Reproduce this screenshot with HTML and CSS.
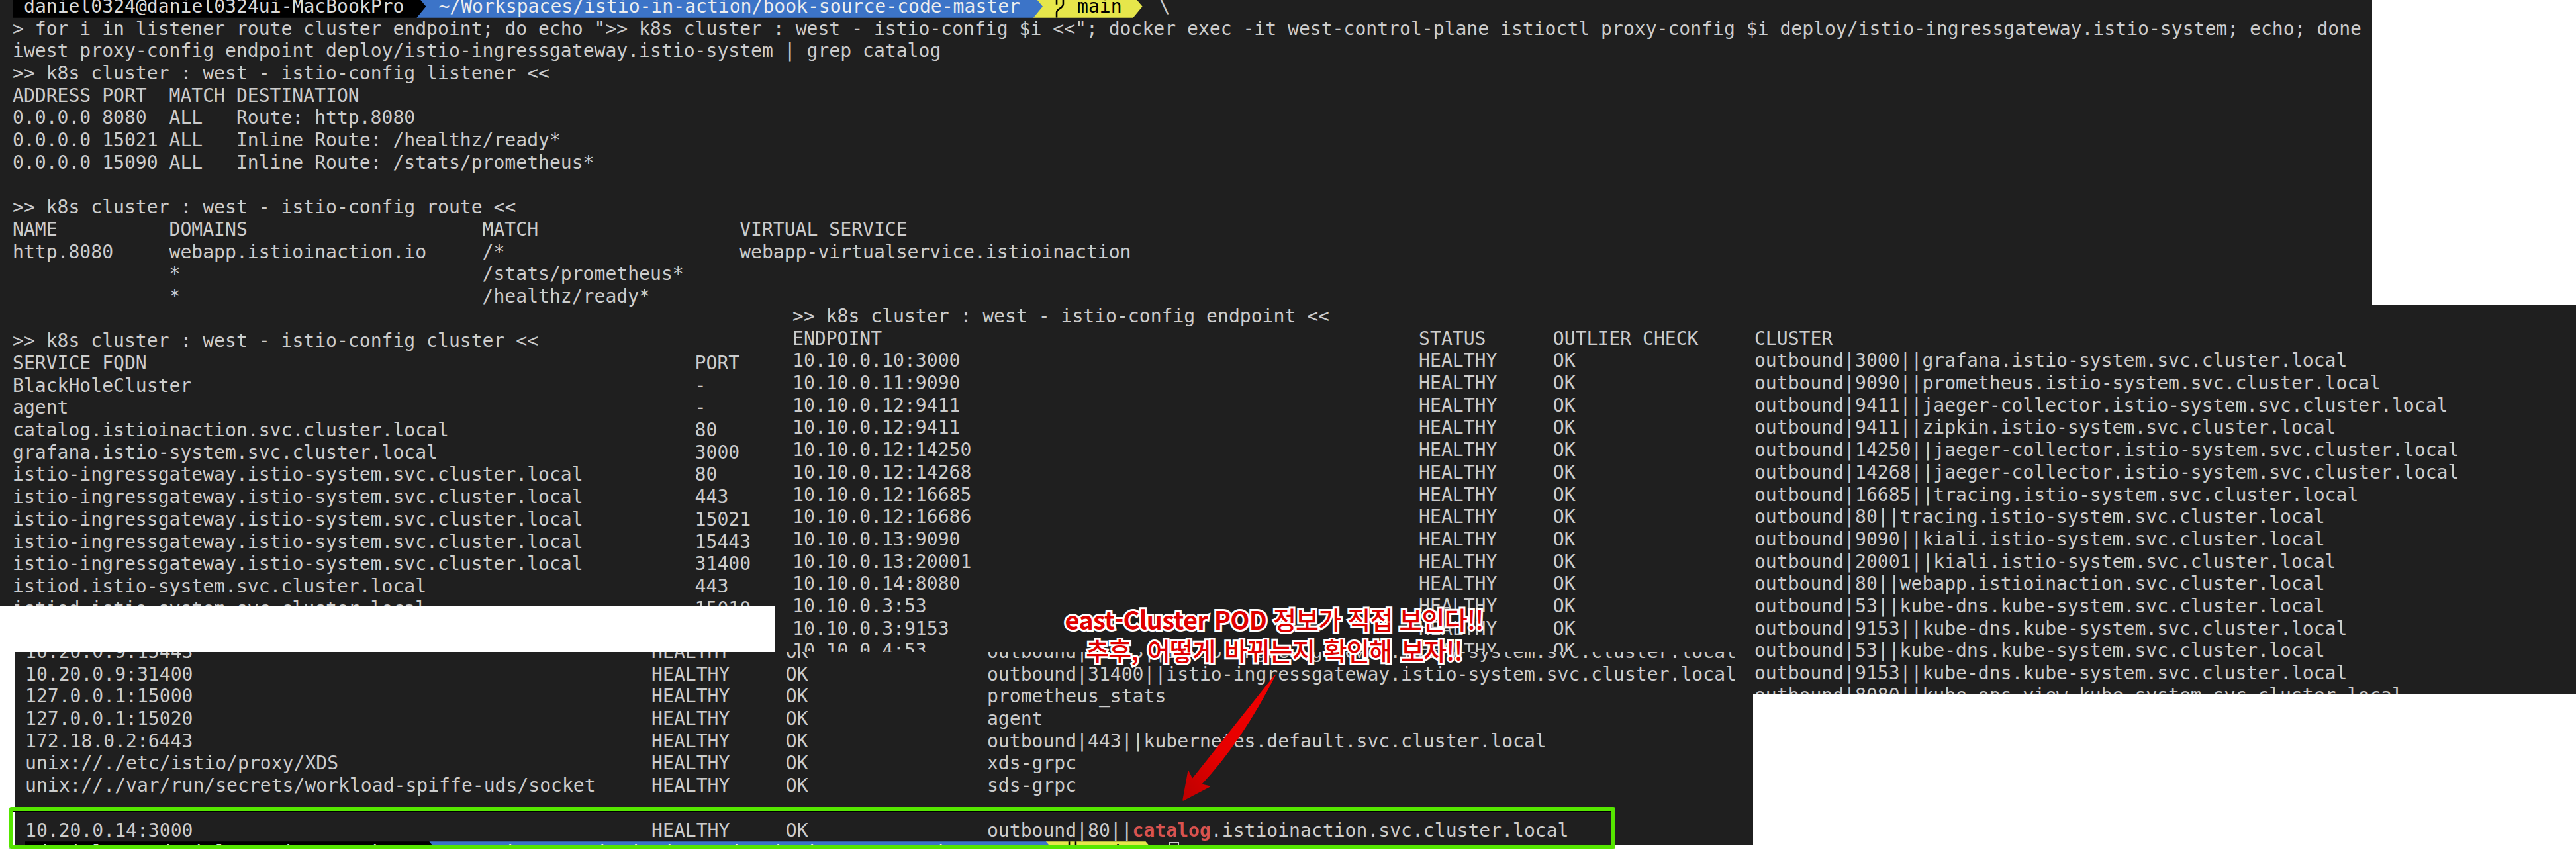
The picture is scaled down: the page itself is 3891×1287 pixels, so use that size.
FILE: index.html
```html
<!DOCTYPE html>
<html lang="en">
<head>
<meta charset="utf-8">
<title>istio proxy-config</title>
<link rel="stylesheet" href="styles.css">
</head>
<body>
<main class="canvas">

  <section class="panel panel-top">
    <div class="prompt">
      <span class="seg seg-user">daniel0324@daniel0324ui-MacBookPro</span>
      <span class="seg seg-path">~/Workspaces/istio-in-action/book-source-code-master</span>
      <span class="seg seg-git"><svg class="branch" viewBox="0 0 18 34"><path d="M4 34V26C4 20 14 20 14 13V0M4 0V14"/></svg>main</span>
      <span class="slash">\</span>
    </div>
    <div class="line">&gt; for i in listener route cluster endpoint; do echo "&gt;&gt; k8s cluster : west - istio-config $i &lt;&lt;"; docker exec -it west-control-plane istioctl proxy-config $i deploy/istio-ingressgateway.istio-system; echo; done</div>
    <div class="line">iwest proxy-config endpoint deploy/istio-ingressgateway.istio-system | grep catalog</div>
    <div class="line">&gt;&gt; k8s cluster : west - istio-config listener &lt;&lt;</div>
    <div class="grid listener">
      <span>ADDRESS</span><span>PORT</span><span>MATCH</span><span>DESTINATION</span>
      <span>0.0.0.0</span><span>8080</span><span>ALL</span><span>Route: http.8080</span>
      <span>0.0.0.0</span><span>15021</span><span>ALL</span><span>Inline Route: /healthz/ready*</span>
      <span>0.0.0.0</span><span>15090</span><span>ALL</span><span>Inline Route: /stats/prometheus*</span>
    </div>
    <div class="line blank"></div>
    <div class="line">&gt;&gt; k8s cluster : west - istio-config route &lt;&lt;</div>
    <div class="grid route">
      <span>NAME</span><span>DOMAINS</span><span>MATCH</span><span>VIRTUAL SERVICE</span>
      <span>http.8080</span><span>webapp.istioinaction.io</span><span>/*</span><span>webapp-virtualservice.istioinaction</span>
      <span></span><span>*</span><span>/stats/prometheus*</span><span></span>
      <span></span><span>*</span><span>/healthz/ready*</span><span></span>
    </div>
    <div class="line blank"></div>
    <div class="line">&gt;&gt; k8s cluster : west - istio-config cluster &lt;&lt;</div>
    <div class="grid cluster">
      <span>SERVICE FQDN</span><span>PORT</span>
      <span>BlackHoleCluster</span><span>-</span>
      <span>agent</span><span>-</span>
      <span>catalog.istioinaction.svc.cluster.local</span><span>80</span>
      <span>grafana.istio-system.svc.cluster.local</span><span>3000</span>
      <span>istio-ingressgateway.istio-system.svc.cluster.local</span><span>80</span>
      <span>istio-ingressgateway.istio-system.svc.cluster.local</span><span>443</span>
      <span>istio-ingressgateway.istio-system.svc.cluster.local</span><span>15021</span>
      <span>istio-ingressgateway.istio-system.svc.cluster.local</span><span>15443</span>
      <span>istio-ingressgateway.istio-system.svc.cluster.local</span><span>31400</span>
      <span>istiod.istio-system.svc.cluster.local</span><span>443</span>
      <span>istiod.istio-system.svc.cluster.local</span><span>15010</span>
    </div>
  </section>

  <section class="panel panel-endpoint">
    <div class="line">&gt;&gt; k8s cluster : west - istio-config endpoint &lt;&lt;</div>
    <div class="grid endpoint">
      <span>ENDPOINT</span><span>STATUS</span><span>OUTLIER CHECK</span><span>CLUSTER</span>
      <span>10.10.0.10:3000</span><span>HEALTHY</span><span>OK</span><span>outbound|3000||grafana.istio-system.svc.cluster.local</span>
      <span>10.10.0.11:9090</span><span>HEALTHY</span><span>OK</span><span>outbound|9090||prometheus.istio-system.svc.cluster.local</span>
      <span>10.10.0.12:9411</span><span>HEALTHY</span><span>OK</span><span>outbound|9411||jaeger-collector.istio-system.svc.cluster.local</span>
      <span>10.10.0.12:9411</span><span>HEALTHY</span><span>OK</span><span>outbound|9411||zipkin.istio-system.svc.cluster.local</span>
      <span>10.10.0.12:14250</span><span>HEALTHY</span><span>OK</span><span>outbound|14250||jaeger-collector.istio-system.svc.cluster.local</span>
      <span>10.10.0.12:14268</span><span>HEALTHY</span><span>OK</span><span>outbound|14268||jaeger-collector.istio-system.svc.cluster.local</span>
      <span>10.10.0.12:16685</span><span>HEALTHY</span><span>OK</span><span>outbound|16685||tracing.istio-system.svc.cluster.local</span>
      <span>10.10.0.12:16686</span><span>HEALTHY</span><span>OK</span><span>outbound|80||tracing.istio-system.svc.cluster.local</span>
      <span>10.10.0.13:9090</span><span>HEALTHY</span><span>OK</span><span>outbound|9090||kiali.istio-system.svc.cluster.local</span>
      <span>10.10.0.13:20001</span><span>HEALTHY</span><span>OK</span><span>outbound|20001||kiali.istio-system.svc.cluster.local</span>
      <span>10.10.0.14:8080</span><span>HEALTHY</span><span>OK</span><span>outbound|80||webapp.istioinaction.svc.cluster.local</span>
      <span>10.10.0.3:53</span><span>HEALTHY</span><span>OK</span><span>outbound|53||kube-dns.kube-system.svc.cluster.local</span>
      <span>10.10.0.3:9153</span><span>HEALTHY</span><span>OK</span><span>outbound|9153||kube-dns.kube-system.svc.cluster.local</span>
      <span>10.10.0.4:53</span><span>HEALTHY</span><span>OK</span><span>outbound|53||kube-dns.kube-system.svc.cluster.local</span>
      <span>10.10.0.4:9153</span><span>HEALTHY</span><span>OK</span><span>outbound|9153||kube-dns.kube-system.svc.cluster.local</span>
      <span>10.10.0.5:8080</span><span>HEALTHY</span><span>OK</span><span>outbound|8080||kube-ops-view.kube-system.svc.cluster.local</span>
    </div>
  </section>

  <section class="panel panel-east">
    <div class="grid endpoint">
      <span>10.20.0.9:15443</span><span>HEALTHY</span><span>OK</span><span>outbound|15443||istio-ingressgateway.istio-system.svc.cluster.local</span>
      <span>10.20.0.9:31400</span><span>HEALTHY</span><span>OK</span><span>outbound|31400||istio-ingressgateway.istio-system.svc.cluster.local</span>
      <span>127.0.0.1:15000</span><span>HEALTHY</span><span>OK</span><span>prometheus_stats</span>
      <span>127.0.0.1:15020</span><span>HEALTHY</span><span>OK</span><span>agent</span>
      <span>172.18.0.2:6443</span><span>HEALTHY</span><span>OK</span><span>outbound|443||kubernetes.default.svc.cluster.local</span>
      <span>unix://./etc/istio/proxy/XDS</span><span>HEALTHY</span><span>OK</span><span>xds-grpc</span>
      <span>unix://./var/run/secrets/workload-spiffe-uds/socket</span><span>HEALTHY</span><span>OK</span><span>sds-grpc</span>
    </div>
    <div class="line blank"></div>
    <div class="grid endpoint">
      <span>10.20.0.14:3000</span><span>HEALTHY</span><span>OK</span><span>outbound|80||<b class="match">catalog</b>.istioinaction.svc.cluster.local</span>
    </div>
    <div class="prompt">
      <span class="seg seg-user">daniel0324@daniel0324ui-MacBookPro</span>
      <span class="seg seg-path">~/Workspaces/istio-in-action/book-source-code-master</span>
      <span class="seg seg-git"><svg class="branch" viewBox="0 0 18 34"><path d="M4 34V26C4 20 14 20 14 13V0M4 0V14"/></svg>main</span>
      <span class="cursor"></span>
    </div>
  </section>

  <div class="highlight"></div>

  <svg class="arrow" viewBox="0 0 160 200">
    <defs>
      <linearGradient id="arrowFill" x1="1" y1="0" x2="0" y2="1">
        <stop offset="0" stop-color="#f00000"/>
        <stop offset="0.6" stop-color="#e60000"/>
        <stop offset="1" stop-color="#bd0000"/>
      </linearGradient>
    </defs>
    <path class="arrow-shape" d="M146 0Q95 100 34 165L47 168 7 189 15 145 21 157Z"/>
  </svg>

  <div class="note" lang="ko">
    <p><b>east-Cluster POD</b> 정보가 직접 보인다!!</p>
    <p class="note-second">추후, 어떻게 바뀌는지 확인해 보자!!</p>
  </div>

</main>
</body>
</html>
```

FILE: styles.css
```css
* { box-sizing: border-box; }

html, body {
  margin: 0;
  padding: 0;
  background: #fff;
}

.canvas {
  position: relative;
  width: 3891px;
  height: 1287px;
  overflow: hidden;
  background: #fff;
}

/* Screenshots pasted on a free canvas */
.panel {
  position: absolute;
  overflow: hidden;
  background: #1f1f1f;
  color: #cccccc;
  font-family: "DejaVu Sans Mono", "Liberation Mono", monospace;
  font-size: 28.07px;
  line-height: 33.7px;
  white-space: nowrap;
}

.panel-top {
  left: 0;
  top: 0;
  width: 3583px;
  height: 915px;
  padding: 0 0 0 19px;
}
.panel-top > .prompt { margin-top: -7px; }

.panel-endpoint {
  left: 1170px;
  top: 461px;
  width: 2721px;
  height: 587px;
  padding-left: 27px;
}

.panel-east {
  left: 22px;
  top: 985px;
  width: 2626px;
  height: 292px;
  padding-left: 16px;
}
.panel-east > .grid:first-child { margin-top: -17px; }

.line { height: 33.7px; }

.grid {
  display: grid;
  grid-auto-rows: 33.7px;
}
.listener { grid-template-columns: 8ch 6ch 6ch 1fr; }
.route    { grid-template-columns: 14ch 28ch 23ch 1fr; }
.cluster  { grid-template-columns: 61ch 1fr; }
.endpoint { grid-template-columns: 56ch 12ch 18ch 1fr; }

.match {
  font-weight: 700;
  color: #d9534f;
}

/* Powerline prompt */
.prompt {
  display: flex;
  height: 33.7px;
}
.seg {
  position: relative;
  display: flex;
  align-items: center;
  height: 100%;
  margin-right: -14px;
  clip-path: polygon(0 0, calc(100% - 14px) 0, 100% 50%, calc(100% - 14px) 100%, 0 100%);
}
.seg-user {
  z-index: 3;
  padding: 0 33px 0 17px;
  background: #000;
  color: #d9d9d9;
}
.seg-path {
  z-index: 2;
  padding: 0 34px 0 33px;
  background: #3c74c8;
  color: #eeeeee;
}
.seg-git {
  z-index: 1;
  margin-right: 0;
  padding: 0 31px 0 31px;
  background: #e6e64b;
  color: #000;
}
.branch {
  width: 18px;
  height: 33.7px;
  margin-right: 17px;
  fill: none;
  stroke: #000;
  stroke-width: 2.6;
}
.slash { margin-left: 25px; }
.cursor {
  width: 16px;
  height: 33.7px;
  margin-left: 20px;
  margin-top: 1px;
  border: 2px solid #cccccc;
}

/* Annotations laid over the screenshots */
.highlight {
  position: absolute;
  left: 14px;
  top: 1219px;
  width: 2426px;
  height: 63px;
  border: 6px solid #55e600;
  border-radius: 3px;
  box-shadow: 0 1px 0 #7a8a90, inset 0 1px 0 #000;
}

.arrow {
  position: absolute;
  left: 1780px;
  top: 1020px;
  width: 160px;
  height: 200px;
}
.arrow-shape {
  fill: url(#arrowFill);
  stroke: url(#arrowFill);
  stroke-width: 1.5;
  stroke-linejoin: round;
}

.note {
  position: absolute;
  left: 1522px;
  top: 911px;
  width: 805px;
  font-family: "Noto Sans CJK KR", "Noto Sans", sans-serif;
  font-size: 38px;
  font-weight: 500;
  line-height: 47px;
  letter-spacing: -0.8px;
  text-align: center;
  color: #e00000;
  -webkit-text-stroke: 6px #fff;
  paint-order: stroke fill;
}
.note p { margin: 0; }
.note b { font-weight: 700; }
.note-second { word-spacing: 4px; }
```
